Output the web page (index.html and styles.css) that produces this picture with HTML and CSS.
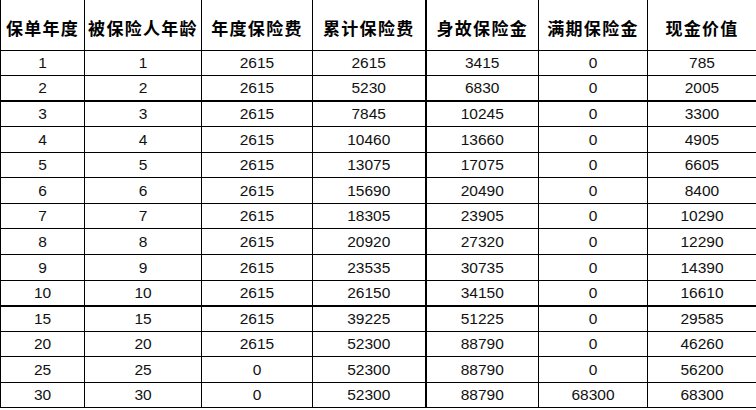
FILE: index.html
```html
<!DOCTYPE html>
<html lang="zh-CN">
<head>
<meta charset="utf-8">
<title>保险利益表</title>
<link rel="stylesheet" href="styles.css">
</head>
<body>
<table class="benefit-table">
  <colgroup>
    <col class="c1"><col class="c2"><col class="c3"><col class="c4"><col class="c5"><col class="c6"><col class="c7">
  </colgroup>
  <thead>
    <tr>
      <th>保单年度</th><th>被保险人年龄</th><th>年度保险费</th><th class="split">累计保险费</th><th>身故保险金</th><th>满期保险金</th><th>现金价值</th>
    </tr>
  </thead>
  <tbody>
    <tr><td>1</td><td>1</td><td>2615</td><td class="split">2615</td><td>3415</td><td>0</td><td>785</td></tr>
    <tr class="thick"><td>2</td><td>2</td><td>2615</td><td class="split">5230</td><td>6830</td><td>0</td><td>2005</td></tr>
    <tr><td>3</td><td>3</td><td>2615</td><td class="split">7845</td><td>10245</td><td>0</td><td>3300</td></tr>
    <tr><td>4</td><td>4</td><td>2615</td><td class="split">10460</td><td>13660</td><td>0</td><td>4905</td></tr>
    <tr><td>5</td><td>5</td><td>2615</td><td class="split">13075</td><td>17075</td><td>0</td><td>6605</td></tr>
    <tr><td>6</td><td>6</td><td>2615</td><td class="split">15690</td><td>20490</td><td>0</td><td>8400</td></tr>
    <tr><td>7</td><td>7</td><td>2615</td><td class="split">18305</td><td>23905</td><td>0</td><td>10290</td></tr>
    <tr><td>8</td><td>8</td><td>2615</td><td class="split">20920</td><td>27320</td><td>0</td><td>12290</td></tr>
    <tr><td>9</td><td>9</td><td>2615</td><td class="split">23535</td><td>30735</td><td>0</td><td>14390</td></tr>
    <tr class="thick"><td>10</td><td>10</td><td>2615</td><td class="split">26150</td><td>34150</td><td>0</td><td>16610</td></tr>
    <tr><td>15</td><td>15</td><td>2615</td><td class="split">39225</td><td>51225</td><td>0</td><td>29585</td></tr>
    <tr><td>20</td><td>20</td><td>2615</td><td class="split">52300</td><td>88790</td><td>0</td><td>46260</td></tr>
    <tr><td>25</td><td>25</td><td>0</td><td class="split">52300</td><td>88790</td><td>0</td><td>56200</td></tr>
    <tr><td>30</td><td>30</td><td>0</td><td class="split">52300</td><td>88790</td><td>68300</td><td>68300</td></tr>
  </tbody>
</table>
</body>
</html>
```
FILE: styles.css
```css
html, body {
  margin: 0;
  padding: 0;
  background: #fff;
}

.benefit-table {
  width: 756px;
  border-collapse: collapse;
  table-layout: fixed;
  color: #111;
}

.c1 { width: 84px; }
.c2 { width: 117px; }
.c3 { width: 111px; }
.c4 { width: 113px; }
.c5 { width: 113px; }
.c6 { width: 109px; }
.c7 { width: 109px; }

.benefit-table th,
.benefit-table td {
  border: 1px solid #000;
  padding: 0;
  text-align: center;
  white-space: nowrap;
  overflow: hidden;
}

.benefit-table th {
  height: 50px;
  border-top: none;
  padding-top: 5px;
  box-sizing: border-box;
  font-family: "Noto Sans CJK SC", "Noto Sans CJK JP", sans-serif;
  font-weight: 700;
  font-size: 17px;
  letter-spacing: 1.3px;
  color: #000;
}

.benefit-table td {
  height: 25.57px;
  box-sizing: border-box;
  font-family: "Liberation Sans", Arial, sans-serif;
  font-size: 15.5px;
  line-height: 1;
}

.benefit-table tr.thick td {
  border-bottom: 2px solid #000;
}

.benefit-table .split {
  border-right: 2px solid #000;
}
```
